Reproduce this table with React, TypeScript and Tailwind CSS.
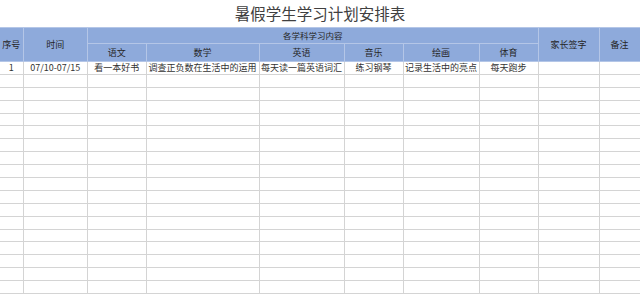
const subjects = [
  { name: '语文', plan: '看一本好书' },
  { name: '数学', plan: '调查正负数在生活中的运用' },
  { name: '英语', plan: '每天读一篇英语词汇' },
  { name: '音乐', plan: '练习钢琴' },
  { name: '绘画', plan: '记录生活中的亮点' },
  { name: '体育', plan: '每天跑步' },
];

const colWidths = [23, 64.5, 58.5, 113, 85, 59, 76, 59, 61, 41];
const emptyRows = Array.from({ length: 18 });

const headCell = 'border border-[#b4c6e7] bg-[#8eaadb] text-center font-normal text-[#262626] p-0 leading-none';
const bodyCell = 'border border-[#d4d4d4] text-center text-[#333333] p-0 leading-none whitespace-nowrap overflow-hidden';

export default function App() {
  return (
    <div className="w-[640px] h-[294px] overflow-hidden bg-white font-['Noto_Sans_CJK_SC','Noto_Sans',sans-serif]">
      <div className="h-[27px] flex items-center justify-center text-[15.5px] text-[#404040] pt-[1px]">
        暑假学生学习计划安排表
      </div>
      <table className="table-fixed border-collapse w-[640px] text-[9px]">
        <colgroup>
          {colWidths.map((w, i) => (
            <col key={i} style={{ width: w }} />
          ))}
        </colgroup>
        <thead>
          <tr className="h-[16px]">
            <th rowSpan={2} className={headCell + ' border-l-0'}>序号</th>
            <th rowSpan={2} className={headCell}>时间</th>
            <th colSpan={6} className={headCell + ' text-[8.5px]'}>各学科学习内容</th>
            <th rowSpan={2} className={headCell}>家长签字</th>
            <th rowSpan={2} className={headCell}>备注</th>
          </tr>
          <tr className="h-[18px]">
            {subjects.map((s) => (
              <th key={s.name} className={headCell}>{s.name}</th>
            ))}
          </tr>
        </thead>
        <tbody>
          <tr className="h-[12.9px]">
            <td className={bodyCell + ' border-l-0'}>1</td>
            <td className={bodyCell}>07/10-07/15</td>
            {subjects.map((s) => (
              <td key={s.name} className={bodyCell}>{s.plan}</td>
            ))}
            <td className={bodyCell}></td>
            <td className={bodyCell}></td>
          </tr>
          {emptyRows.map((_, r) => (
            <tr key={r} className="h-[12.9px]">
              {colWidths.map((_, c) => (
                <td key={c} className={bodyCell + (c === 0 ? ' border-l-0' : '')}></td>
              ))}
            </tr>
          ))}
        </tbody>
      </table>
    </div>
  );
}
